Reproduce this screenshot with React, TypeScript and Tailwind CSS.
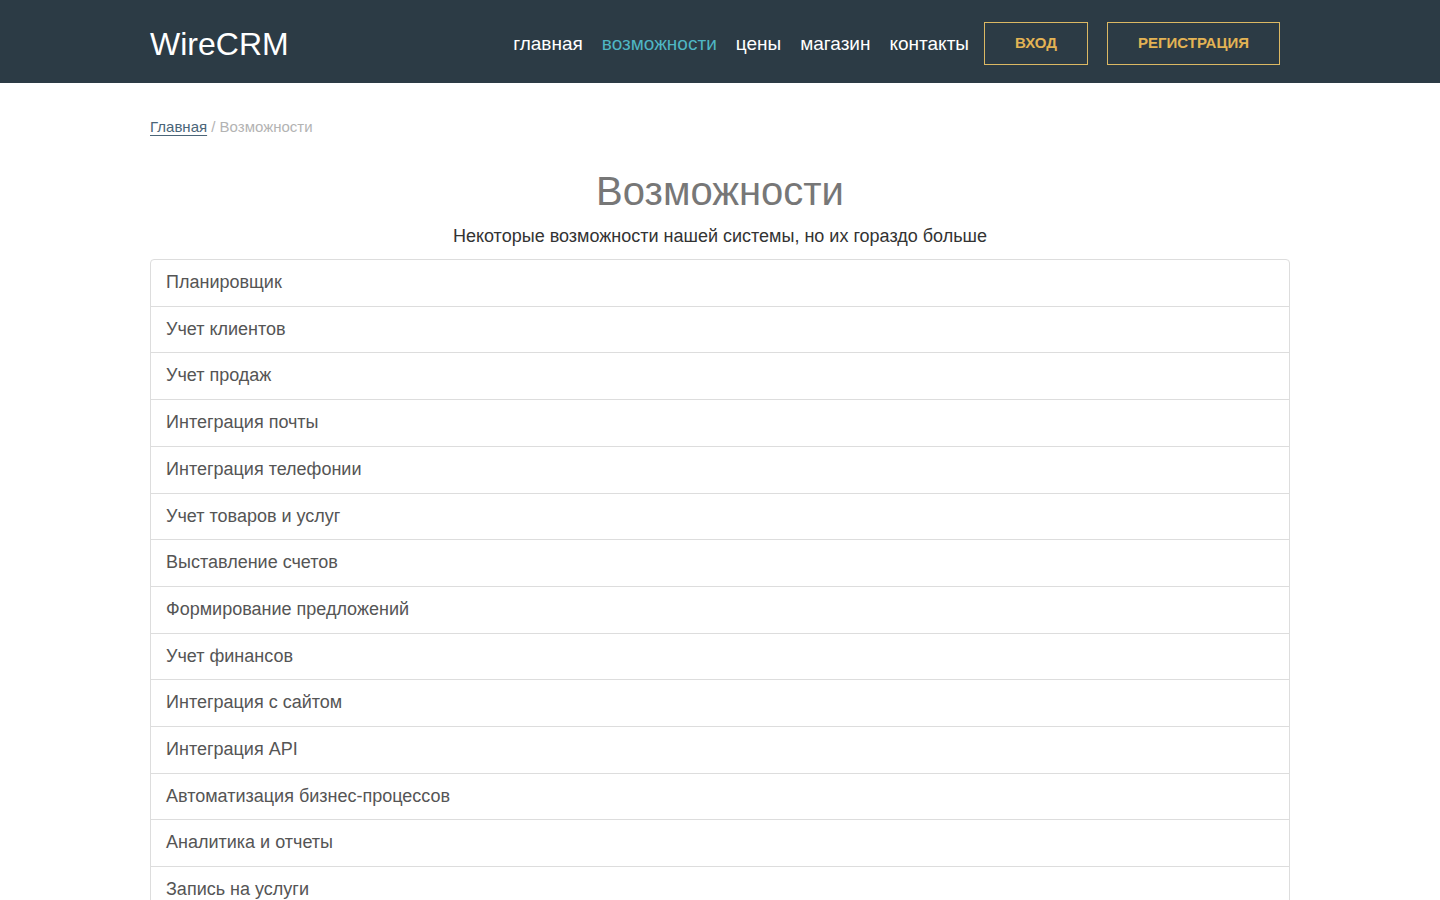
const features = [
  'Планировщик',
  'Учет клиентов',
  'Учет продаж',
  'Интеграция почты',
  'Интеграция телефонии',
  'Учет товаров и услуг',
  'Выставление счетов',
  'Формирование предложений',
  'Учет финансов',
  'Интеграция с сайтом',
  'Интеграция API',
  'Автоматизация бизнес-процессов',
  'Аналитика и отчеты',
  'Запись на услуги',
  'Онлайн-запись',
  'Мобильная версия',
];

const navLinks = [
  { label: 'главная', active: false },
  { label: 'возможности', active: true },
  { label: 'цены', active: false },
  { label: 'магазин', active: false },
  { label: 'контакты', active: false },
];

export default function App() {
  return (
    <div className="min-h-screen bg-white font-['Liberation_Sans',Arial,sans-serif]">
      <header className="h-[83px] bg-[#2c3b45] pt-[4px]">
        <div className="mx-auto flex h-full w-[1140px] items-center">
          <a href="#" className="text-[32px] leading-none text-white">
            WireCRM
          </a>
          <nav className="ml-auto mr-[10px] flex items-center">
            <div className="flex items-center gap-[19px]">
              {navLinks.map((l) => (
                <a
                  key={l.label}
                  href="#"
                  className={`text-[19px] leading-none ${l.active ? 'text-[#4fb6c4]' : 'text-white'}`}
                >
                  {l.label}
                </a>
              ))}
            </div>
            <a
              href="#"
              className="ml-[15px] flex h-[43px] w-[104px] items-center justify-center border border-[#dcb863] text-[15px] font-bold text-[#e3b354]"
            >
              ВХОД
            </a>
            <a
              href="#"
              className="ml-[19px] flex h-[43px] w-[173px] items-center justify-center border border-[#dcb863] text-[15px] font-bold text-[#e3b354]"
            >
              РЕГИСТРАЦИЯ
            </a>
          </nav>
        </div>
      </header>

      <main className="mx-auto w-[1140px] pt-[34px]">
        <div className="text-[15px] leading-[20px]">
          <a href="#" className="text-[#4a6578] underline decoration-[#4a6578] underline-offset-[3px]">
            Главная
          </a>
          <span className="text-[#b3b3b3]"> / Возможности</span>
        </div>

        <h1 className="mt-[30px] text-center text-[40px] leading-[48px] text-[#777777]">Возможности</h1>
        <p className="mt-[9px] text-center text-[18px] leading-[24px] text-[#333333]">
          Некоторые возможности нашей системы, но их гораздо больше
        </p>

        <ul className="mt-[11px] overflow-hidden rounded-[4px] border border-[#dddddd]">
          {features.map((f, i) => (
            <li
              key={f}
              className={`px-[15px] py-[12px] text-[18px] leading-[21.7px] text-[#555555] ${i > 0 ? 'border-t border-[#dddddd]' : ''}`}
            >
              {f}
            </li>
          ))}
        </ul>
      </main>
    </div>
  );
}
